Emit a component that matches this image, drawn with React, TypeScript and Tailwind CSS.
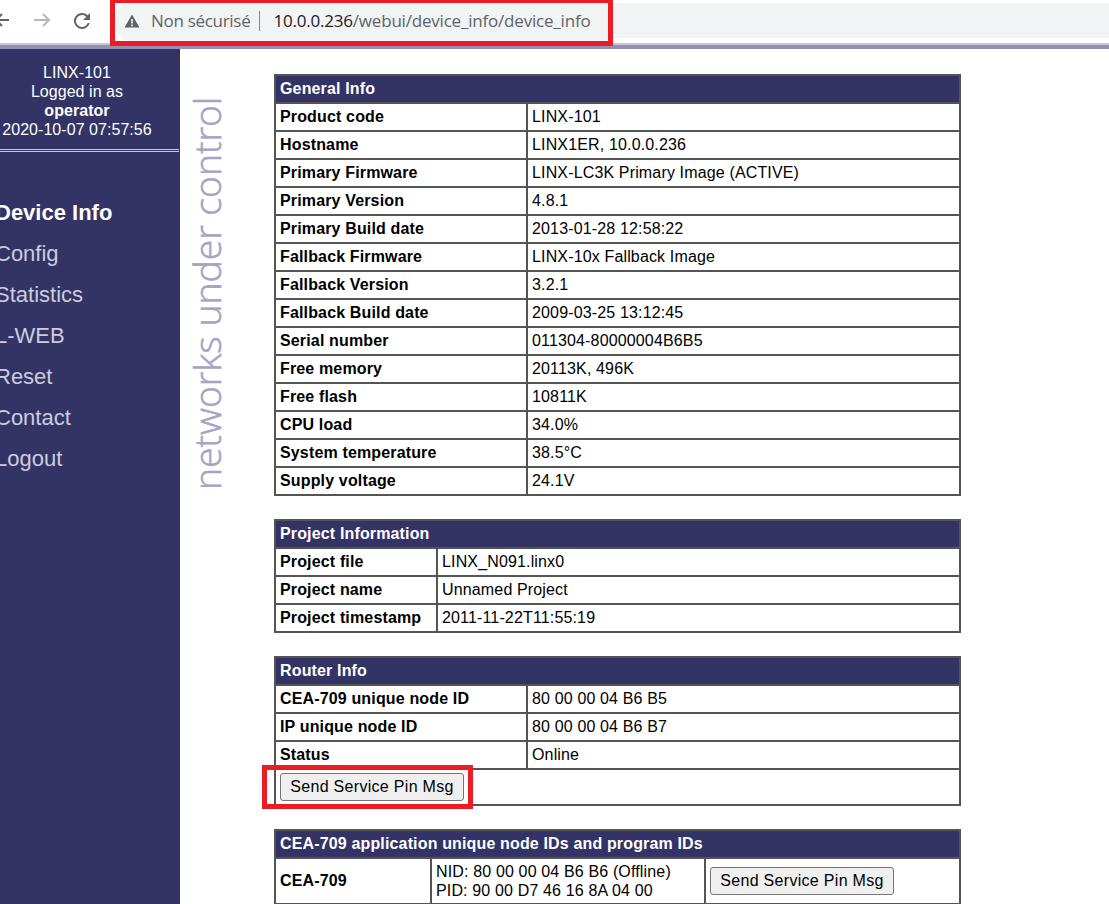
import React from 'react';

const generalInfo = [
    ['Product code', 'LINX-101'],
    ['Hostname', 'LINX1ER, 10.0.0.236'],
    ['Primary Firmware', 'LINX-LC3K Primary Image (ACTIVE)'],
    ['Primary Version', '4.8.1'],
    ['Primary Build date', '2013-01-28 12:58:22'],
    ['Fallback Firmware', 'LINX-10x Fallback Image'],
    ['Fallback Version', '3.2.1'],
    ['Fallback Build date', '2009-03-25 13:12:45'],
    ['Serial number', '011304-80000004B6B5'],
    ['Free memory', '20113K, 496K'],
    ['Free flash', '10811K'],
    ['CPU load', '34.0%'],
    ['System temperature', '38.5°C'],
    ['Supply voltage', '24.1V'],
];

const projectInfo = [
    ['Project file', 'LINX_N091.linx0'],
    ['Project name', 'Unnamed Project'],
    ['Project timestamp', '2011-11-22T11:55:19'],
];

const routerInfo = [
    ['CEA-709 unique node ID', '80 00 00 04 B6 B5'],
    ['IP unique node ID', '80 00 00 04 B6 B7'],
    ['Status', 'Online'],
];

const menu = ['Config', 'Statistics', 'L-WEB', 'Reset', 'Contact', 'Logout'];

const cell = 'border-2 border-[#555555] px-[4px] h-[28px] py-0 text-left align-middle tracking-[0.15px]';

const Header = ({ title, span }: { title: string; span: number }) => (
    <tr>
        <th colSpan={span} className={`${cell} bg-[#333366] text-white font-bold`}>{title}</th>
    </tr>
);

const SendButton = () => (
    <button className="block h-[28px] w-[184px] bg-[#efefef] border border-[#767676] rounded-[3px] text-[16px] tracking-[0.3px] text-black">
        Send Service Pin Msg
    </button>
);

const InfoTable = ({ title, rows, labelWidth, children }: {
    title: string
    rows: string[][]
    labelWidth: string
    children?: React.ReactNode
}) => (
    <table className="w-[687px] border-collapse table-fixed mb-[23px]">
        <colgroup>
            <col className={labelWidth} />
            <col />
        </colgroup>
        <tbody>
            <Header title={title} span={2} />
            {rows.map((r) => (
                <tr key={r[0]}>
                    <td className={`${cell} font-bold`}>{r[0]}</td>
                    <td className={cell}>{r[1]}</td>
                </tr>
            ))}
            {children}
        </tbody>
    </table>
);

const App = () => {
    return (
        <div className="w-[1109px] h-[904px] overflow-hidden bg-white font-['Liberation_Sans',Arial,sans-serif] text-[16px] text-black flex flex-col">
            <div className="h-[43px] shrink-0 flex items-start bg-white relative">
                <svg className="absolute left-[-8px] top-[10px]" width="20" height="20" viewBox="0 0 20 20" fill="none" stroke="#5f6368" strokeWidth="2"><path d="M17 10H4M10 4l-6 6 6 6" /></svg>
                <svg className="absolute left-[32px] top-[10px]" width="20" height="20" viewBox="0 0 20 20" fill="none" stroke="#b5b8bc" strokeWidth="2"><path d="M2 10h15M11 4l6 6-6 6" /></svg>
                <svg className="absolute left-[72px] top-[11px]" width="20" height="20" viewBox="0 0 20 20" fill="#5f6368"><path d="M15.65 4.35A8 8 0 1 0 17.73 12h-2.08A6 6 0 1 1 10 4c1.66 0 3.14.69 4.22 1.78L11 9h7V2z" /></svg>
                <div className="ml-[110px] h-[46px] w-[503px] shrink-0 border-[#ed1c24] border-x-[5px] border-t-[3px] border-b-[5px] relative z-10 bg-white">
                    <div className="h-full rounded-l-[16px] bg-[#f1f3f4] flex items-center pl-[9px] pb-[3px] text-[#5f6368] font-['Open_Sans',sans-serif] text-[17px]">
                        <svg width="16" height="16" viewBox="0 0 16 16" fill="#5f6368"><path d="M8 1.5 15.5 14.5H.5zM7.2 6v4.5h1.6V6zm0 5.6v1.6h1.6v-1.6z" fillRule="evenodd" /></svg>
                        <span className="ml-[11px] tracking-[-0.3px]">Non sécurisé</span>
                        <span className="mx-[9px] w-[1px] h-[20px] bg-[#80868b]" />
                        <span className="ml-[4px] tracking-[-0.2px] whitespace-nowrap"><span className="text-[#202124]">10.0.0.236</span>/webui/device_info/device_info</span>
                    </div>
                </div>
                <div className="flex-1 mt-[3px] h-[35px] bg-[#f1f3f4]" />
            </div>
            <div className="h-[2px] shrink-0 bg-[#c8c8d6]" />
            <div className="h-[4px] shrink-0 bg-[#9090b8]" />
            <div className="flex flex-1 min-h-0">
                <aside className="w-[180px] shrink-0 bg-[#333366] text-white">
                    <div className="text-center w-[154px] pt-[14px] leading-[19px] h-[100px] tracking-[0.05px]">
                        <div>LINX-101</div>
                        <div>Logged in as</div>
                        <div className="font-bold">operator</div>
                        <div className="whitespace-nowrap">2020-10-07 07:57:56</div>
                    </div>
                    <div className="h-[3px] border-y border-[#ccccdd] mr-[1px]" />
                    <nav className="mt-[40px] ml-[-5px] text-[22px] leading-[41px]">
                        <div className="font-bold">Device Info</div>
                        {menu.map((m) => (
                            <div key={m} className="text-[#ccccdd]">{m}</div>
                        ))}
                    </nav>
                </aside>
                <div className="w-[94px] shrink-0 pl-[5px] pt-[45px]">
                    <div className="[writing-mode:vertical-rl] rotate-180 font-['Open_Sans',sans-serif] font-light text-[37.3px] leading-[44px] text-[#a4a4c4] [-webkit-text-stroke:0.6px_#a4a4c4] whitespace-nowrap h-[396px] text-left">
                        networks under control
                    </div>
                </div>
                <main className="pt-[25px] min-w-0">
                    <InfoTable title="General Info" rows={generalInfo} labelWidth="w-[252px]" />
                    <InfoTable title="Project Information" rows={projectInfo} labelWidth="w-[162px]" />
                    <InfoTable title="Router Info" rows={routerInfo} labelWidth="w-[252px]">
                        <tr>
                            <td colSpan={2} className={`${cell} h-[36px]`}>
                                <div className="relative w-[184px]">
                                    <SendButton />
                                    <div className="absolute -left-[18px] -right-[9px] -top-[8px] -bottom-[8px] border-[5px] border-[#ed1c24] pointer-events-none" />
                                </div>
                            </td>
                        </tr>
                    </InfoTable>
                    <table className="w-[687px] border-collapse table-fixed">
                        <colgroup>
                            <col className="w-[156px]" />
                            <col className="w-[274px]" />
                            <col />
                        </colgroup>
                        <tbody>
                            <Header title="CEA-709 application unique node IDs and program IDs" span={3} />
                            <tr>
                                <td className={`${cell} font-bold h-[46px]`}>CEA-709</td>
                                <td className={`${cell} leading-[19px] h-[46px]`}>
                                    <div className="whitespace-nowrap">NID: 80 00 00 04 B6 B6 (Offline)</div>
                                    <div className="whitespace-nowrap">PID: 90 00 D7 46 16 8A 04 00</div>
                                </td>
                                <td className={`${cell} h-[46px]`}><SendButton /></td>
                            </tr>
                        </tbody>
                    </table>
                </main>
            </div>
        </div>
    )
}

export default App
